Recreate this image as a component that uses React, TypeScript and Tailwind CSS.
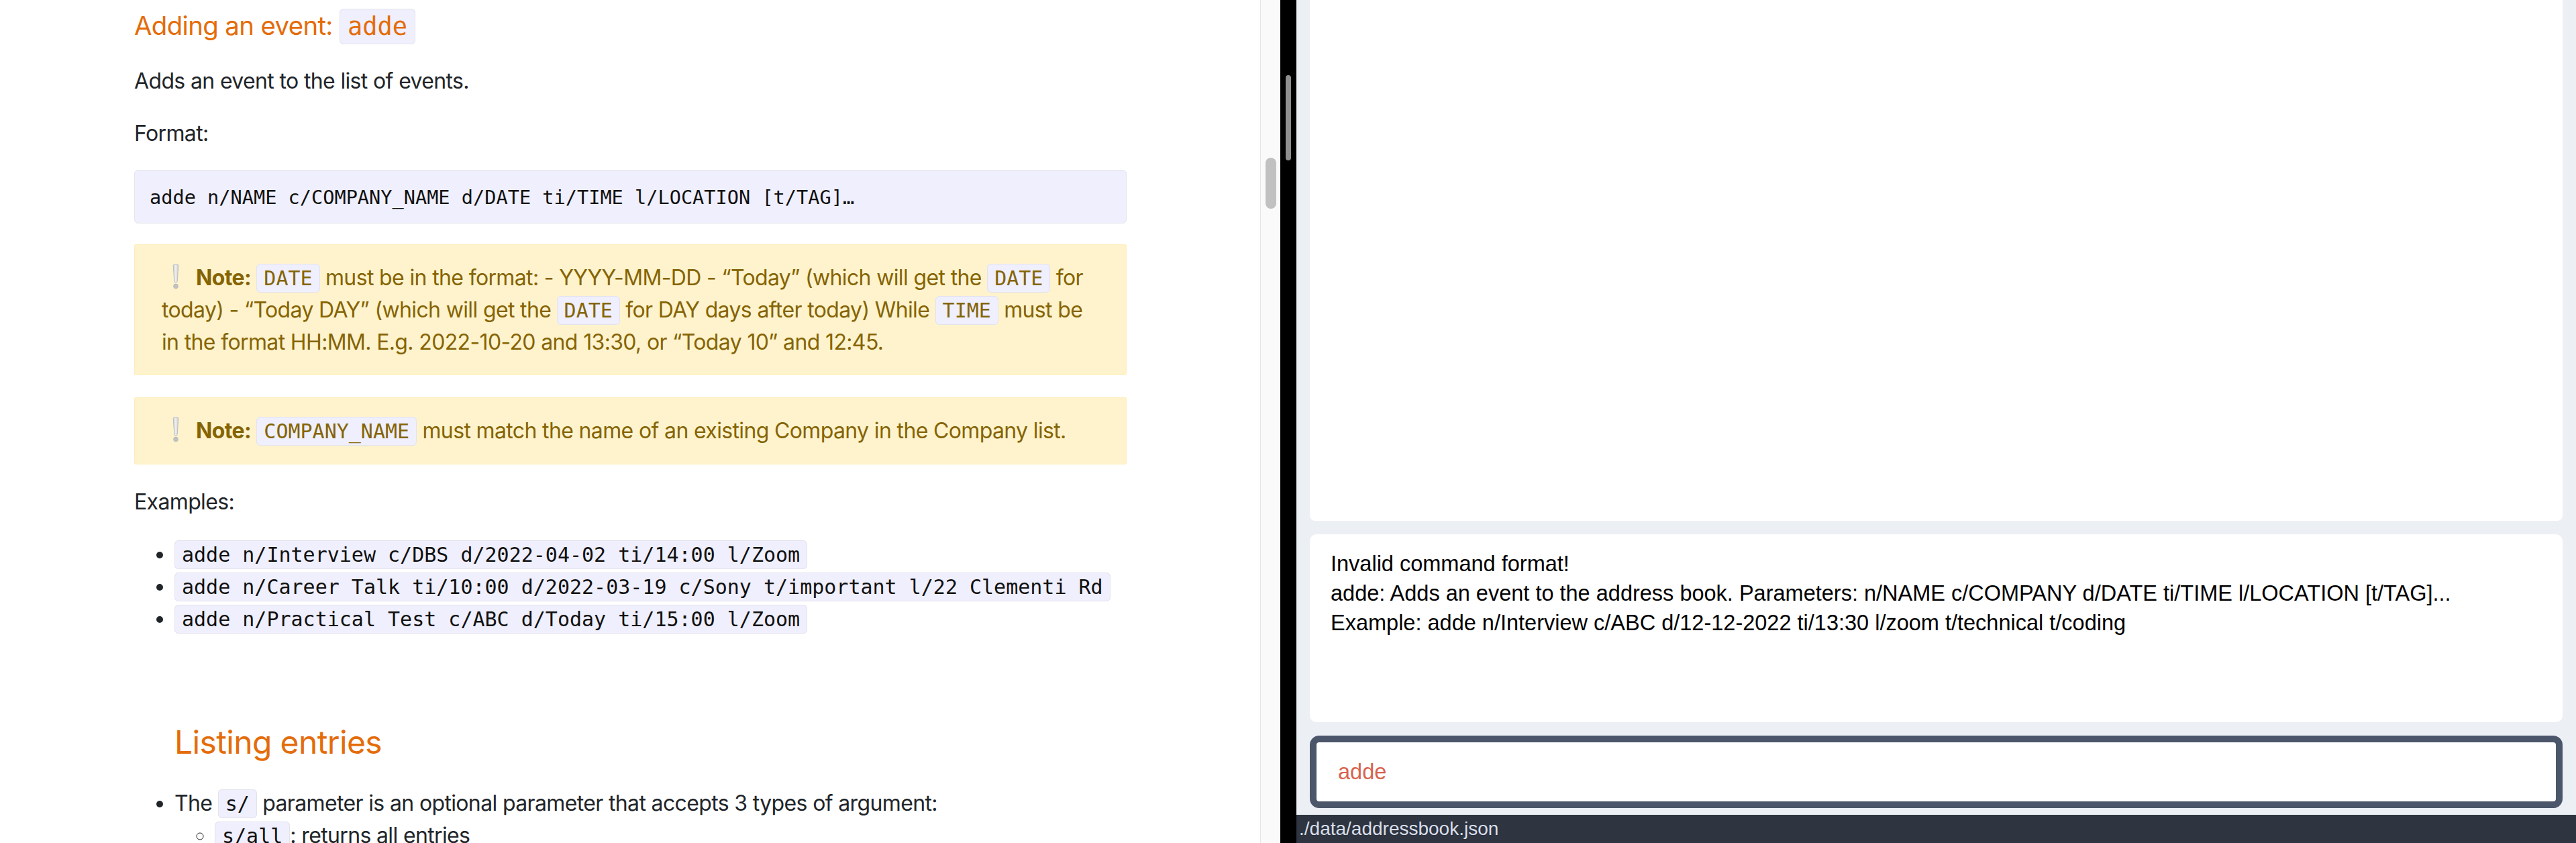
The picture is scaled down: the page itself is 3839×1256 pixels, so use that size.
import React from "react";

function C({
  children,
  className = "",
}: {
  children: React.ReactNode;
  className?: string;
}) {
  return (
    <code
      className={`font-['DejaVu_Sans_Mono',monospace] tracking-normal text-[30px] leading-none px-[10px] py-[3px] bg-[#efeffd] border border-[#e3e3ec] rounded-[6px] ${className}`}
    >
      {children}
    </code>
  );
}

function Bang() {
  return (
    <svg
      width="10"
      height="38"
      viewBox="0 0 10 38"
      className="inline-block ml-[16px] mr-[25px] align-[-6px]"
    >
      <defs>
        <linearGradient id="bg1" x1="0" y1="0" x2="1" y2="0">
          <stop offset="0" stopColor="#cfcfcf" />
          <stop offset="0.5" stopColor="#f2f2f2" />
          <stop offset="1" stopColor="#c4c4c4" />
        </linearGradient>
      </defs>
      <path
        d="M1.2 2.5 Q1.2 0.6 5 0.6 Q8.8 0.6 8.8 2.5 L7.2 26 Q7 28 5 28 Q3 28 2.8 26 Z"
        fill="url(#bg1)"
        stroke="#bdbdbd"
        strokeWidth="1"
      />
      <circle cx="5" cy="33.5" r="3.4" fill="#c2c2c2" stroke="#b4b4b4" strokeWidth="0.8" />
    </svg>
  );
}

export default function App() {
  return (
    <div className="flex w-[3839px] h-[1256px] overflow-hidden bg-white">
      {/* Left documentation page */}
      <div className="w-[1878px] h-full bg-white pl-[200px] pr-[199px] pt-[15px] text-[#212529] font-['Inter',sans-serif] tracking-[-0.02em] text-[32px] leading-[48px]">
        <h1 className="text-[38.4px] leading-[46px] text-[#e46c0a] font-normal">
          Adding an event:{" "}
          <C className="text-[37px] px-[11px] py-[4px]">adde</C>
        </h1>
        <p className="mt-[36px]">Adds an event to the list of events.</p>
        <p className="mt-[30px]">Format:</p>
        <pre className="mt-[30px] bg-[#efeffd] border border-[#e4e4ec] rounded-[6px] pl-[22px] pt-[19px] pb-[17px] font-['DejaVu_Sans_Mono',monospace] tracking-normal text-[28.6px] leading-[42px] text-[#111]">
          adde n/NAME c/COMPANY_NAME d/DATE ti/TIME l/LOCATION [t/TAG]…
        </pre>

        <div className="mt-[31px] bg-[#fff3cd] border border-[#ffeeba] rounded-[2px] pl-[40px] pr-[40px] pt-[25px] pb-[24px] text-[#856404]">
          <div className="whitespace-nowrap">
            <Bang />
            <b className="font-bold">Note:</b> <C>DATE</C> must be in the format: - YYYY-MM-DD - “Today” (which will get the{" "}
            <C>DATE</C> for
          </div>
          <div className="whitespace-nowrap">
            today) - “Today DAY” (which will get the <C>DATE</C> for DAY days after today) While{" "}
            <C>TIME</C> must be
          </div>
          <div className="whitespace-nowrap">
            in the format HH:MM. E.g. 2022-10-20 and 13:30, or “Today 10” and 12:45.
          </div>
        </div>

        <div className="mt-[33px] bg-[#fff3cd] border border-[#ffeeba] rounded-[2px] pl-[40px] pr-[40px] pt-[25px] pb-[25px] text-[#856404]">
          <div className="whitespace-nowrap">
            <Bang />
            <b className="font-bold">Note:</b> <C>COMPANY_NAME</C> must match the name of an existing Company in the Company list.
          </div>
        </div>

        <p className="mt-[32px]">Examples:</p>
        <ul className="mt-[30px] list-disc pl-[60px]">
          <li>
            <C className="text-[#111]">adde n/Interview c/DBS d/2022-04-02 ti/14:00 l/Zoom</C>
          </li>
          <li>
            <C className="text-[#111]">adde n/Career Talk ti/10:00 d/2022-03-19 c/Sony t/important l/22 Clementi Rd</C>
          </li>
          <li>
            <C className="text-[#111]">adde n/Practical Test c/ABC d/Today ti/15:00 l/Zoom</C>
          </li>
        </ul>

        <h2 className="mt-[131px] pl-[60px] text-[48px] leading-[58px] text-[#e46c0a] font-normal">
          Listing entries
        </h2>
        <ul className="mt-[38px] list-disc pl-[60px]">
          <li>
            The <C className="text-[#111]">s/</C> parameter is an optional parameter that accepts 3 types of argument:
            <ul className="list-[circle] pl-[60px]">
              <li>
                <C className="text-[#111]">s/all</C>: returns all entries
              </li>
            </ul>
          </li>
        </ul>
      </div>

      {/* Left page scrollbar */}
      <div className="w-[30px] h-full bg-[#fafafa] border-l border-[#e6e6e6] pt-[235px] pl-[7px]">
        <div className="w-[16px] h-[76px] rounded-full bg-[#c1c1c1]" />
      </div>

      {/* Dark strip with scrollbar */}
      <div className="w-[24px] h-full bg-black pt-[112px] pl-[8px]">
        <div className="w-[8px] h-[127px] rounded-full bg-[#8f8f8f]" />
      </div>

      {/* Right app panel */}
      <div className="flex-1 h-full flex flex-col bg-[#eceff4] font-['Liberation_Sans',Arial,sans-serif]">
        <div className="flex flex-col px-[20px] pb-[10px]">
          <div className="h-[776px] bg-white rounded-b-[8px]" />
          <div className="mt-[20px] h-[280px] bg-white rounded-[10px] pl-[31px] pt-[22px] text-[32.5px] leading-[44px] text-black">
            <div>Invalid command format!</div>
            <div>
              adde: Adds an event to the address book. Parameters: n/NAME c/COMPANY d/DATE ti/TIME l/LOCATION [t/TAG]...
            </div>
            <div>Example: adde n/Interview c/ABC d/12-12-2022 ti/13:30 l/zoom t/technical t/coding</div>
          </div>
          <div className="mt-[20px] h-[108px] border-[10px] border-[#4c566a] rounded-[14px] bg-white pl-[32px] pt-[22px] text-[32.5px] leading-[44px] text-[#d8634f]">
            adde
          </div>
        </div>
        <div className="h-[42px] bg-[#2e3440] pl-[4px] text-[28px] leading-[42px] text-[#d8dee9]">
          ./data/addressbook.json
        </div>
      </div>
    </div>
  );
}
